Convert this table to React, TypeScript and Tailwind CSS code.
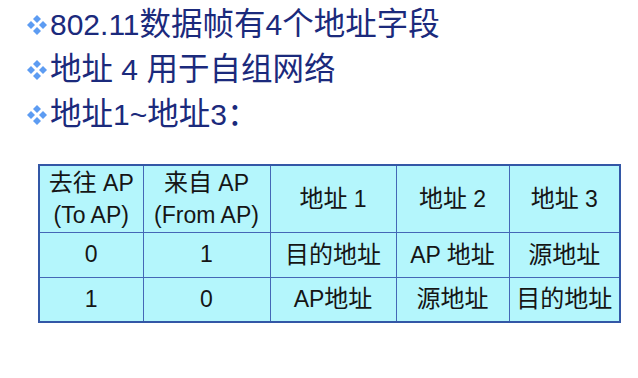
const font = { fontFamily: '"Liberation Sans", "Noto Sans CJK SC", sans-serif' };

// CJK glyphs in the slide are drawn a bit larger than the Latin ones
function Mixed({ text, cjk }: { text: string; cjk: string }) {
    const parts = text.match(/[\u3000-\u9fff\uff00-\uffef]+|[^\u3000-\u9fff\uff00-\uffef]+/g) || [];
    return (
        <>
            {parts.map((p, i) =>
                /[\u3000-\u9fff\uff00-\uffef]/.test(p) ? <span key={i} className={cjk}>{p}</span> : <span key={i}>{p}</span>
            )}
        </>
    );
}

function Bullet() {
    return (
        <svg width="22" height="22" viewBox="0 0 22 22" className="shrink-0">
            <path d="M11 1 L15 5 L11 9 L7 5 Z" fill="#5d9cf2"/>
            <path d="M5 7 L9 11 L5 15 L1 11 Z" fill="#5d9cf2"/>
            <path d="M17 7 L21 11 L17 15 L13 11 Z" fill="#5d9cf2"/>
            <path d="M11 13 L15 17 L11 21 L7 17 Z" fill="#5d9cf2"/>
        </svg>
    );
}

const lines = ["802.11数据帧有4个地址字段", "地址 4 用于自组网络", "地址1~地址3："];

const rows = [
    ["0", "1", "目的地址", "AP 地址", "源地址"],
    ["1", "0", "AP地址", "源地址", "目的地址"],
];

const cell = "border border-[#4468b6]";

export default function App() {
    return (
        <div className="w-[638px] h-[378px] bg-white overflow-hidden" style={font}>
            <div className="pl-[26px] pt-[2px] flex flex-col text-[#1b2a7c] text-[30px] leading-[45px]">
                {lines.map((l, i) => (
                    <div key={i} className="flex items-center gap-[2px]">
                        <Bullet/>
                        <span><Mixed text={l} cjk="text-[31.5px]"/></span>
                    </div>
                ))}
            </div>
            <div className="pl-[38px] pt-[27px]">
                <table className="table-fixed border-collapse border-2 border-[#3357a6] bg-[#b4f6fc] text-[#151515] text-[23px] text-center">
                    <thead>
                        <tr className="h-[67px]">
                            <th className={`w-[104px] font-normal leading-[32px] ${cell}`}><Mixed text="去往 AP" cjk="text-[24px]"/><br/>(To AP)</th>
                            <th className={`w-[127px] font-normal leading-[32px] ${cell}`}><Mixed text="来自 AP" cjk="text-[24px]"/><br/>(From AP)</th>
                            <th className={`w-[126px] font-normal ${cell}`}><Mixed text="地址 1" cjk="text-[24px]"/></th>
                            <th className={`w-[113px] font-normal ${cell}`}><Mixed text="地址 2" cjk="text-[24px]"/></th>
                            <th className={`w-[111px] font-normal ${cell}`}><Mixed text="地址 3" cjk="text-[24px]"/></th>
                        </tr>
                    </thead>
                    <tbody>
                        {rows.map((r, i) => (
                            <tr key={i} className="h-[45px]">
                                {r.map((c, j) => (
                                    <td key={j} className={cell}><Mixed text={c} cjk="text-[24px]"/></td>
                                ))}
                            </tr>
                        ))}
                    </tbody>
                </table>
            </div>
        </div>
    );
}
